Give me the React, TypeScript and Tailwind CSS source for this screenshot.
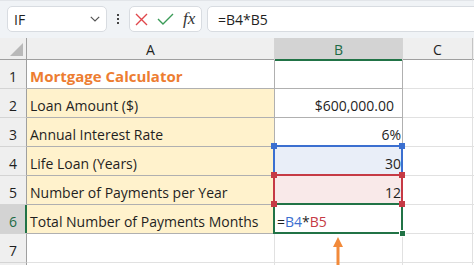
import type { FC, ReactNode } from 'react';

type Ref = 'blue' | 'red' | 'green';

interface RowProps {
    n: number,
    a?: ReactNode,
    b?: ReactNode,
    fillA?: boolean,
    table?: boolean,
    topOfTable?: boolean,
    refColor?: Ref,
    active?: boolean,
}

const rows: RowProps[] = [
    { n: 1, a: <span className="font-bold text-[15px] text-[#ed7d31]">Mortgage Calculator</span>, topOfTable: true },
    { n: 2, a: 'Loan Amount ($)', b: <span className="pr-[7px]">$600,000.00</span>, fillA: true, table: true },
    { n: 3, a: 'Annual Interest Rate', b: '6%', fillA: true, table: true },
    { n: 4, a: 'Life Loan (Years)', b: '30', fillA: true, table: true, refColor: 'blue' },
    { n: 5, a: 'Number of Payments per Year', b: '12', fillA: true, table: true, refColor: 'red' },
    {
        n: 6,
        a: 'Total Number of Payments Months',
        b: <span>=<span className="text-[#3b6fd0]">B4</span>*<span className="text-[#c63a45]">B5</span></span>,
        fillA: true,
        table: true,
        refColor: 'green',
        active: true,
    },
    { n: 7 },
];

const refBorder: Record<Ref, string> = {
    blue: 'border-[#3b6fd0]',
    red: 'border-[#c63a45]',
    green: 'border-[#217346]',
};
const refHandle: Record<Ref, string> = {
    blue: 'bg-[#3b6fd0]',
    red: 'bg-[#c63a45]',
    green: 'bg-[#217346]',
};

const Handle: FC<{ color: string, pos: string }> = ({ color, pos }) => (
    <span className={`absolute z-20 w-[6px] h-[6px] ${color} ${pos}`} />
);

const Toolbar: FC = () => (
    <div className="h-[38px] bg-[#f0f3f6] border-t border-[#e2e5e9] flex items-start pt-[5px] pl-[7px] gap-0 overflow-hidden">
        {/* name box */}
        <div className="w-[100px] h-[26px] bg-white border border-[#d8dce1] rounded-[5px] flex items-center pl-[6px] pr-[6px]">
            <span className="text-[14px] text-[#1f1f1f] flex-1">IF</span>
            <svg width="10" height="6" viewBox="0 0 10 6" className="text-[#555]">
                <path d="M0.8 0.8 L5 5 L9.2 0.8" fill="none" stroke="currentColor" strokeWidth="1.2" />
            </svg>
        </div>
        {/* dots */}
        <div className="w-[22px] h-[26px] flex flex-col items-center justify-center gap-[2px]">
            <span className="w-[2px] h-[2px] bg-[#444]" />
            <span className="w-[2px] h-[2px] bg-[#444]" />
            <span className="w-[2px] h-[2px] bg-[#444]" />
        </div>
        {/* cancel / enter / fx */}
        <div className="w-[73px] h-[26px] bg-white border border-[#d8dce1] rounded-[5px] flex items-center pl-[5px] gap-[9px]">
            <svg width="13" height="13" viewBox="0 0 13 13">
                <path d="M1 1 L12 12 M12 1 L1 12" stroke="#e0474c" strokeWidth="1.4" fill="none" />
            </svg>
            <svg width="17" height="12" viewBox="0 0 17 12">
                <path d="M1 6 L6 11 L16 1" stroke="#3a9b57" strokeWidth="1.4" fill="none" />
            </svg>
            <span className="font-['Liberation_Serif',serif] italic text-[17px] leading-none text-[#333] -mt-[2px]">fx</span>
        </div>
        {/* formula */}
        <div className="ml-[5px] flex-1 -mr-[10px] h-[26px] bg-white border border-[#d8dce1] rounded-[5px] flex items-center pl-[10px]">
            <span className="text-[14px] text-[#1f1f1f]">=B4*B5</span>
        </div>
    </div>
);

const grid = 'grid grid-cols-[27px_248px_128px_70px_1fr]';

const Header: FC = () => (
    <div className={`${grid} h-[22px] bg-[#efefef] border-b border-[#9f9f9f] text-[14px]`}>
        <div className="relative border-r border-[#9f9f9f]">
            <svg width="14" height="13" viewBox="0 0 14 13" className="absolute left-[10px] top-[5px]">
                <path d="M13 0 L13 13 L0 13 Z" fill="#b9b9b9" />
            </svg>
        </div>
        <div className="border-r border-[#d4d4d4] flex items-center justify-center text-[#1f1f1f] pt-[1px]">A</div>
        <div className="relative bg-[#d3d3d3] border-r border-[#d4d4d4] flex items-center justify-center text-[#1d6b45] pt-[1px]">
            B
            <span className="absolute left-0 right-0 -bottom-px h-[2px] bg-[#217346]" />
        </div>
        <div className="border-r border-[#c4c4c4] flex items-center justify-center text-[#1f1f1f] pt-[1px]">C</div>
        <div />
    </div>
);

const Row: FC<RowProps> = ({ n, a, b, fillA, table, topOfTable, refColor, active }) => {
    const tableLine = table || topOfTable ? 'border-[#b0b0b0]' : 'border-[#e1e1e1]';
    return (
        <div className={`${grid} h-[29px] text-[14px] text-[#1f1f1f]`}>
            <div
                className={`relative flex items-end justify-center pb-[1px] border-b border-[#d4d4d4] border-r ${
                    active ? 'bg-[#d3d3d3] text-[#1d6b45] border-r-[#9f9f9f]' : 'bg-[#efefef] border-r-[#9f9f9f]'
                }`}
            >
                {n}
                {active && <span className="absolute -right-px top-0 bottom-0 w-[2px] bg-[#217346]" />}
            </div>
            <div className={`flex items-end pl-[3px] pb-[1px] border-b border-r whitespace-nowrap ${tableLine} ${fillA ? 'bg-[#fff2cc]' : ''}`}>
                {a}
            </div>
            <div
                className={`relative flex items-end pb-[1px] border-b border-r ${tableLine} ${
                    refColor === 'green' ? 'justify-start pl-[2px]' : 'justify-end pr-[1px]'
                } ${refColor === 'blue' ? 'bg-[#e9eef8]' : ''} ${refColor === 'red' ? 'bg-[#f9e9e9]' : ''}`}
            >
                {b}
                {refColor && (
                    <span className={`absolute z-10 -left-[2px] -top-[2px] -right-[1px] -bottom-[1px] border-2 ${refBorder[refColor]}`} />
                )}
                {refColor && refColor !== 'green' && (
                    <>
                        <Handle color={refHandle[refColor]} pos="-left-[4px] -top-[4px]" />
                        <Handle color={refHandle[refColor]} pos="-right-[3px] -top-[4px]" />
                        <Handle color={refHandle[refColor]} pos="-left-[4px] -bottom-[3px]" />
                        <Handle color={refHandle[refColor]} pos="-right-[3px] -bottom-[3px]" />
                    </>
                )}
                {refColor === 'green' && (
                    <span className="absolute z-20 -right-[4px] -bottom-[4px] w-[7px] h-[7px] bg-[#217346] border border-white" />
                )}
            </div>
            <div className="border-b border-r border-[#e1e1e1]" />
            <div className="border-b border-[#e1e1e1]" />
        </div>
    );
};

const App: FC = () => {
    return (
        <div className="relative w-[474px] h-[265px] overflow-hidden bg-white font-['Open_Sans','Noto_Sans',sans-serif]">
            <Toolbar />
            <Header />
            {rows.map(r => <Row key={r.n} {...r} />)}
            <div className={`${grid} h-[29px]`}>
                <div className="bg-[#efefef] border-r border-[#9f9f9f]" />
                <div className="border-r border-[#e1e1e1]" />
                <div className="border-r border-[#e1e1e1]" />
                <div className="border-r border-[#e1e1e1]" />
                <div />
            </div>
            {/* orange arrow pointing at the formula */}
            <svg width="14" height="30" viewBox="0 0 14 30" className="absolute left-[331px] top-[237px] z-30">
                <path d="M7 0 L12 10 L8.5 10 L8.5 30 L5.5 30 L5.5 10 L2 10 Z" fill="#f28a3a" />
            </svg>
        </div>
    );
};

export default App;
